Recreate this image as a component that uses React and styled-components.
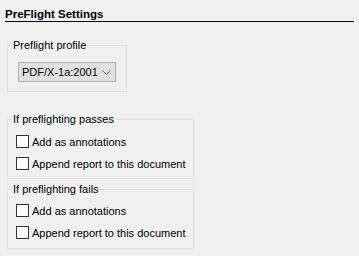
import React from 'react'
import styled, {createGlobalStyle} from 'styled-components'

const GlobalStyle = createGlobalStyle`
html, body {
    margin: 0;
    padding: 0;
    background: #f0f0f0;
}
body {
    font-family: "Liberation Sans", Arial, sans-serif;
    font-size: 11px;
    color: #000;
}
`

const Page = styled.div`
width: 359px;
height: 256px;
padding-top: 7px;
box-sizing: border-box;
white-space: nowrap;
`

const Title = styled.h2`
margin: 0 5px;
font-size: 11.5px;
font-weight: bold;
line-height: 14px;
padding-bottom: 0;
border-bottom: 1px solid #000;
`

const Body = styled.div`
display: flex;
flex-direction: column;
align-items: flex-start;
padding: 0 7px;
margin-top: 16px;
`

const Legend = styled.legend`
padding: 0 1px;
line-height: 14px;
`

const Group = styled.fieldset`
margin: ${p => p.$top || 0}px 0 0 0;
padding: ${p => p.$padTop}px 10px ${p => p.$padBottom}px ${p => p.$padLeft}px;
width: ${p => p.$width}px;
box-sizing: border-box;
border: 1px solid #dcdcdc;
min-width: 0;
${Legend} {
    margin-left: ${p => 4 - p.$padLeft}px;
}
`

const Select = styled.div`
display: flex;
align-items: center;
justify-content: space-between;
width: 98px;
height: 20px;
box-sizing: border-box;
border: 1px solid #adadad;
background: #e1e1e1;
padding: 0 4px 0 3px;
`

const Options = styled.div`
display: flex;
flex-direction: column;
gap: 9px;
`

const Row = styled.label`
display: flex;
align-items: center;
gap: 3px;
height: 13px;
`

const Box = styled.span`
width: 13px;
height: 13px;
box-sizing: border-box;
border: 1px solid #333;
background: #fff;
flex: none;
`

const Chevron = () => (
    <svg width="9" height="5" viewBox="0 0 9 5">
        <path d="M0.5 0.5 L4.5 4.5 L8.5 0.5" fill="none" stroke="#606060" strokeWidth="1"/>
    </svg>
)

const Check = ({label}) => (
    <Row>
        <Box/>
        <span>{label}</span>
    </Row>
)

const App = () => {
    return (
        <Page>
            <GlobalStyle/>
            <Title>PreFlight Settings</Title>
            <Body>
                <Group $width={120} $padTop={10} $padBottom={9} $padLeft={10}>
                    <Legend>Preflight profile</Legend>
                    <Select>
                        <span>PDF/X-1a:2001</span>
                        <Chevron/>
                    </Select>
                </Group>
                <Group $top={20} $width={187} $padTop={9} $padBottom={8} $padLeft={8}>
                    <Legend>If preflighting passes</Legend>
                    <Options>
                        <Check label="Add as annotations"/>
                        <Check label="Append report to this document"/>
                    </Options>
                </Group>
                <Group $top={3} $width={187} $padTop={8} $padBottom={9} $padLeft={8}>
                    <Legend>If preflighting fails</Legend>
                    <Options>
                        <Check label="Add as annotations"/>
                        <Check label="Append report to this document"/>
                    </Options>
                </Group>
            </Body>
        </Page>
    )
}

export default App
